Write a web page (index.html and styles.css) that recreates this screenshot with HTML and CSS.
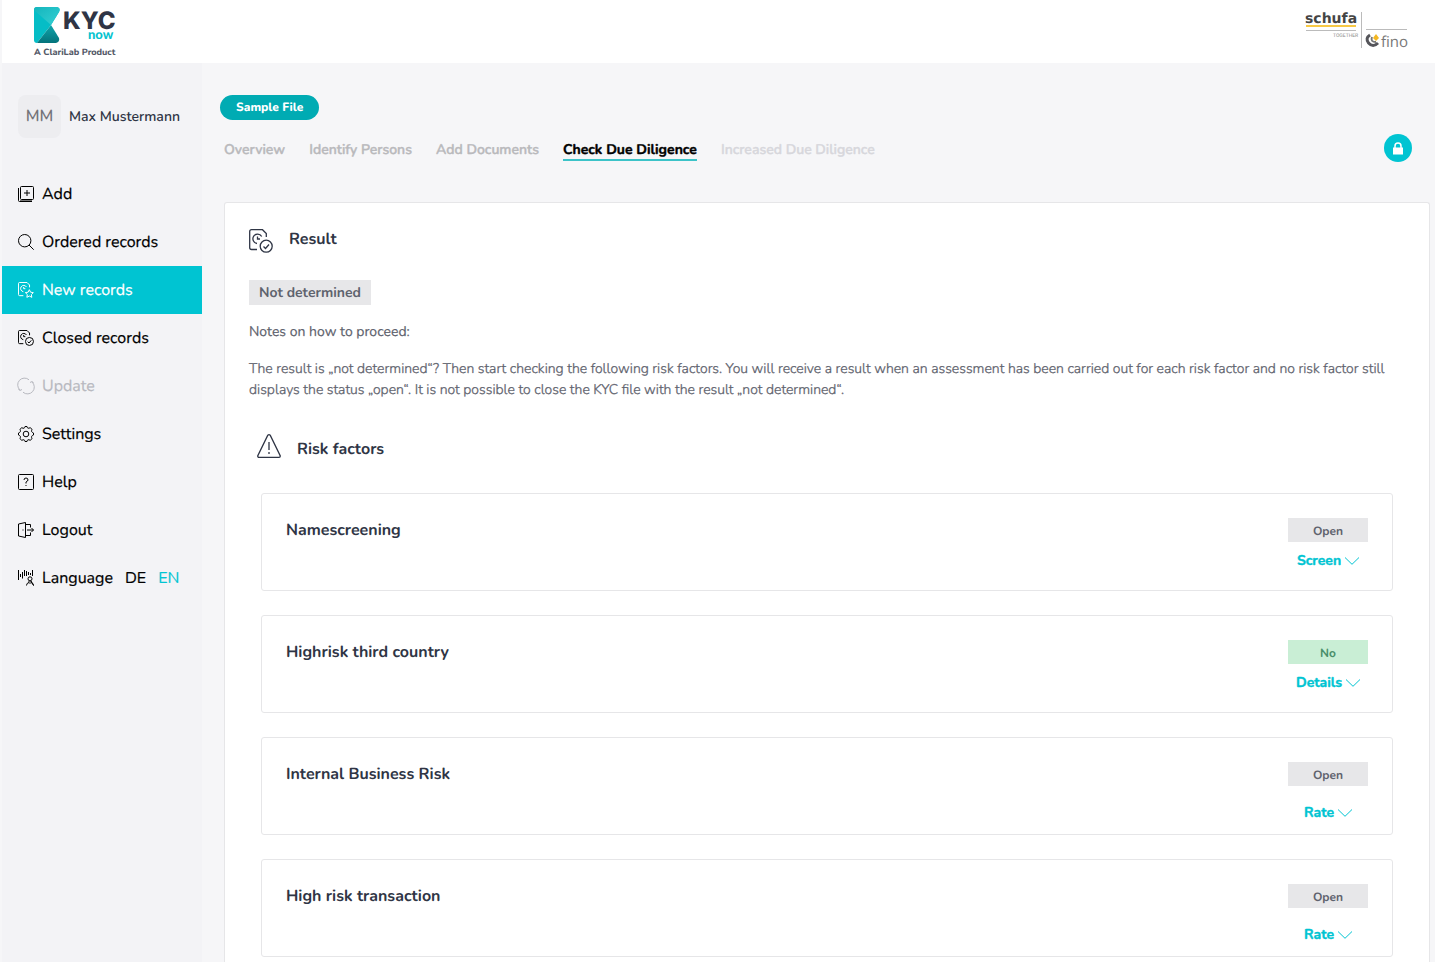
FILE: index.html
```html
<!DOCTYPE html>
<html lang="en">
<head>
<meta charset="utf-8">
<meta name="viewport" content="width=device-width, initial-scale=1">
<title>KYC now – Check Due Diligence</title>
<link rel="stylesheet" href="styles.css">
</head>
<body>
<svg class="sprite" aria-hidden="true">
  <symbol id="record" viewBox="0 0 24 24">
    <path d="M8 20.500H2.500Q.7 20.500.7 18.700V2.500Q.7.700 2.500.700H13.500L17.300 4.500V8M12.700 7.500A4.700 4.700 0 1 0 8 14.500M8.500 7.500V10H11"/>
  </symbol>
  <symbol id="chevron" viewBox="0 0 14 8"><path d="M0 .5 7 7.300 14 .5"/></symbol>
</svg>

<header class="topbar">
  <a class="brand" href="#" aria-label="KYC now">
    <svg width="84" height="50" viewBox="0 0 84 50">
      <defs>
        <linearGradient id="g1" x1="0" y1="0" x2="1" y2="1"><stop offset="0" stop-color="#14b5bd"/><stop offset="1" stop-color="#35d0d3"/></linearGradient>
        <linearGradient id="g2" x1="0" y1="0" x2="0" y2="1"><stop offset="0" stop-color="#10a5ac"/><stop offset="1" stop-color="#04737b"/></linearGradient>
      </defs>
      <path fill="#05bdc6" d="M3 0H23Q27 1 25 5L17 18 3 36Q0 36 0 33V3Q0 0 3 0Z"/>
      <path fill="url(#g1)" d="M3 0H23Q27 1 25 5L17 18 0 3Q0 0 3 0Z"/>
      <path fill="url(#g2)" d="M17 18 25 31Q26 35 22 36H3Z"/>
      <text class="brand-kyc" x="29" y="22">KYC</text>
      <text class="brand-now" x="54" y="32">now</text>
      <text class="brand-sub" x="0" y="48">A ClariLab Product</text>
    </svg>
  </a>
  <svg class="partners" width="103" height="46" viewBox="0 0 103 46" role="img" aria-label="schufa and fino">
    <text class="schufa" x="0" y="16">schufa</text>
    <path stroke="#f8c945" stroke-width="2" d="M1 19H51"/>
    <path stroke="#bbb" d="M1 23.500H51M56.500 5V41M61 22.500H102"/>
    <text class="together" x="28" y="30">TOGETHER</text>
    <path fill="none" stroke="#55555a" stroke-width="3" d="M65 28Q60 31 63.500 36Q68 41 73 36"/>
    <path fill="none" stroke="#777" stroke-width="2" d="M67 30Q65 35 71 35"/>
    <path fill="#f3b722" d="M68 31 71 27 74 31 71 34Z"/>
    <text class="fino" x="76" y="40">fino</text>
  </svg>
</header>

<div class="shell">
  <aside class="sidebar">
    <div class="user"><span class="avatar">MM</span><span class="user-name">Max Mustermann</span></div>
    <nav class="menu">
      <a href="#"><svg class="icon" viewBox="0 0 16 16"><rect x="2.500" y=".5" width="13" height="13" rx="1"/><path d="M9 4V10M6 7H12M.5 2V14.500Q.5 15.500 1.500 15.500H14"/><path class="edge" d="M2 14.500H14"/></svg>Add</a>
      <a href="#"><svg class="icon" viewBox="0 0 16 16"><circle cx="6.700" cy="6.700" r="6.200"/><path d="M11 11 15.700 15.700"/></svg>Ordered records</a>
      <a href="#" class="active" aria-current="page"><svg class="icon record" viewBox="0 0 24 24"><use href="#record" width="24" height="24"/><path d="M17 11.500 18.800 15.300 23 15.900 20 18.800 20.700 23 17 21 13.300 23 14 18.800 11 15.900 15.200 15.300Z"/></svg>New records</a>
      <a href="#"><svg class="icon record" viewBox="0 0 24 24"><use href="#record" width="24" height="24"/><circle cx="17.200" cy="17.200" r="6"/><path d="M14.500 17.500 16.500 19.500 20 15.500"/></svg>Closed records</a>
      <a href="#" class="disabled" aria-disabled="true"><svg class="icon" viewBox="0 0 16 16"><path d="M2 12A6.800 6.800 0 0 1 11 1.800M14 4A6.800 6.800 0 0 1 5 14.200M.3 11.200 2 12.500 4 11.500M12 4.500 14 3.500 15.700 4.800"/></svg>Update</a>
      <a href="#"><svg class="icon" viewBox="0 0 16 16"><circle cx="8" cy="8" r="2.800"/><path d="M6 2.200Q6.800 2 7 .5H9Q9.200 2 10 2.200T12.200 1.700L14.100 3.400Q13.200 4.900 13.700 5.700T15.500 7V9Q14.200 9.300 13.700 10.300T14.100 12.600L12.200 14.300Q10.900 13.500 10 13.800T9 15.500H7Q6.800 14 6 13.800T3.800 14.300L1.900 12.600Q2.800 11.100 2.300 10.300T.5 9V7Q1.800 6.700 2.300 5.700T1.900 3.400L3.800 1.700Q5.100 2.500 6 2.200Z"/></svg>Settings</a>
      <a href="#"><svg class="icon" viewBox="0 0 16 16"><rect x=".5" y=".5" width="15" height="15" rx="1"/><path d="M6 6Q6 4 8 4T10 6Q10 7 8 8V9.500M8 11V12"/></svg>Help</a>
      <a href="#"><svg class="icon" viewBox="0 0 16 16"><path d="M.5 2 7.500.5V15.500L.5 14ZM7.500 2.500H12.500V5.500M7.500 13.500H12.500V10.500M9 8H15.500M13.500 6 15.500 8 13.500 10M5 7.500V8.500"/></svg>Logout</a>
      <div class="language">
        <svg class="icon" viewBox="0 0 16 16"><path d="M.5 0V10M2.500 4V7M4.500 2V8.500M6.500 0V6M8.500 1V6M10.500 2V5M12.500 3V5M14.500 0V6"/><circle cx="12" cy="8.800" r="2"/><path d="M8.500 15.500Q8.500 13 11 12.500V11M13 11V12.500Q15.500 13 15.500 15.500ZM11 12.500 12 13.500 13 12.500"/></svg>
        <span>Language</span><button type="button">DE</button><button type="button" class="current">EN</button>
      </div>
    </nav>
  </aside>

  <main class="content">
    <span class="file-tag">Sample File</span>
    <div class="steps-row">
      <nav class="steps">
        <a href="#">Overview</a>
        <a href="#">Identify Persons</a>
        <a href="#">Add Documents</a>
        <a href="#" class="current" aria-current="step">Check Due Diligence</a>
        <a href="#" class="off" aria-disabled="true">Increased Due Diligence</a>
      </nav>
      <button type="button" class="lock" aria-label="Lock file">
        <svg width="10" height="13" viewBox="0 0 10 13"><rect y="5.500" width="10" height="7" fill="#fff"/><path d="M2 6V4A3 3 0 0 1 8 4V6" fill="none" stroke="#fff" stroke-width="1.500"/></svg>
      </button>
    </div>

    <section class="panel">
      <div class="heading">
        <svg class="heading-icon" viewBox="0 0 24 24"><use href="#record" width="24" height="24"/><circle cx="17.200" cy="17.200" r="6"/><path d="M14.500 17.500 16.500 19.500 20 15.500"/></svg>
        <h2>Result</h2>
      </div>
      <span class="result">Not determined</span>
      <p class="notes">Notes on how to proceed:</p>
      <p class="explain">The result is „not determined“? Then start checking the following risk factors. You will receive a result when an assessment has been carried out for each risk factor and no risk factor still displays the status „open“. It is not possible to close the KYC file with the result „not determined“.</p>

      <div class="risks">
        <div class="heading">
          <svg class="heading-icon" viewBox="0 0 24 24"><path d="M10.800 1.200Q12 0 13.200 1.200L23.300 22Q23.300 23.300 22 23.300H2Q.7 23.300.7 22ZM12 8V16M12 18V20"/></svg>
          <h2>Risk factors</h2>
        </div>
        <div class="cards">
          <article class="card">
            <h3>Namescreening</h3>
            <div class="actions"><span class="status">Open</span><button type="button">Screen<svg class="chevron"><use href="#chevron"/></svg></button></div>
          </article>
          <article class="card">
            <h3>Highrisk third country</h3>
            <div class="actions"><span class="status no">No</span><button type="button">Details<svg class="chevron"><use href="#chevron"/></svg></button></div>
          </article>
          <article class="card">
            <h3>Internal Business Risk</h3>
            <div class="actions rate"><span class="status">Open</span><button type="button">Rate<svg class="chevron"><use href="#chevron"/></svg></button></div>
          </article>
          <article class="card">
            <h3>High risk transaction</h3>
            <div class="actions rate"><span class="status">Open</span><button type="button">Rate<svg class="chevron"><use href="#chevron"/></svg></button></div>
          </article>
        </div>
      </div>
    </section>
  </main>
</div>
</body>
</html>
```
FILE: styles.css
```css
* { box-sizing: border-box; }

body {
  margin: 0;
  padding-left: 2px;
  min-height: 100vh;
  display: flex;
  flex-direction: column;
  background: #f6f6f8;
  color: #2f3545;
  font: 14px/21px Nunito, Lato, "Noto Sans", sans-serif;
  text-rendering: geometricPrecision;
}

a { color: inherit; text-decoration: none; }
button { border: 0; padding: 0; background: none; color: inherit; font: inherit; cursor: pointer; }
h2, h3, p { margin: 0; }
svg { flex: none; }
.sprite { position: absolute; width: 0; height: 0; }

.topbar {
  display: flex;
  justify-content: space-between;
  height: 63px;
  padding: 7px 27px 0 32px;
  background: #fff;
}
.topbar svg { display: block; overflow: visible; }
.brand-kyc { font: 800 24px Inter, sans-serif; fill: #2f3545; }
.brand-now { font: 900 13px Lato, sans-serif; fill: #05c3cf; }
.brand-sub { font: 800 9px Nunito, Lato, sans-serif; fill: #555a68; }
.schufa { font: 700 14px "DejaVu Sans", sans-serif; fill: #444; }
.together { font: 5px Roboto, sans-serif; fill: #888; }
.fino { font: 15px "Open Sans", sans-serif; fill: #777; }

.shell { flex: 1; display: flex; }

.sidebar { flex: none; width: 200px; padding-top: 32px; background: #f3f3f6; }
.user { display: flex; align-items: center; gap: 8px; padding-left: 16px; font-weight: 600; }
.avatar {
  display: grid;
  place-items: center;
  width: 43px;
  height: 43px;
  border-radius: 8px;
  background: #ededf0;
  color: #737378;
  font-size: 16px;
}
.menu { margin-top: 32px; color: #000; font-size: 16px; -webkit-text-stroke: 0.2px; }
.menu > * { display: flex; align-items: center; gap: 8px; height: 48px; padding-left: 16px; }
.menu .active { background: #00c4d2; color: #fff; }
.menu .disabled { color: #b8b9c0; }
.icon { width: 16px; height: 16px; fill: none; stroke: currentColor; overflow: visible; }
.icon.record { stroke-width: 1.5; }
.icon .edge { stroke: #777; }
.language span { margin-right: 4px; }
.language button + button { margin-left: 4px; }
.language .current { color: #00c4d2; }

.content { flex: 1; min-width: 0; display: flex; flex-direction: column; padding: 32px 5px 0 18px; }
.file-tag {
  align-self: flex-start;
  height: 25px;
  padding: 0 16px;
  border-radius: 13px;
  background: #00abb3;
  color: #fff;
  font-size: 12px;
  font-weight: 800;
  line-height: 26px;
}
.steps-row { display: flex; align-items: center; justify-content: space-between; margin-top: 14px; padding: 0 18px 0 4px; }
.steps { display: flex; gap: 24px; margin-top: 4px; color: #b9b9bc; font-weight: 600; line-height: 22px; -webkit-text-stroke: 0.4px; }
.steps a { height: 22px; border-bottom: 2px solid transparent; }
.steps .current { border-color: #3cc3c8; color: #000; font-weight: 700; }
.steps .off { color: #d7d7dc; }
.lock { display: grid; place-items: center; width: 28px; height: 28px; border-radius: 50%; background: #00c4d2; }

.panel {
  flex: 1;
  margin: 40px 0 0 4px;
  padding: 24px 24px 5px;
  border: 1px solid #e6e6e8;
  border-bottom: 0;
  border-radius: 3px 3px 0 0;
  background: #fff;
}
.heading { display: flex; gap: 16px; }
.heading-icon { width: 24px; height: 24px; margin-top: 2px; fill: none; stroke: #2f3545; stroke-width: 1.3; overflow: visible; }
h2, h3 { font-size: 16px; font-weight: 700; line-height: 24px; }
.result {
  display: inline-block;
  margin-top: 27px;
  padding: 0 10px;
  background: #e7e7e9;
  color: #5f636e;
  font-weight: 700;
  line-height: 25px;
}
.notes, .explain { color: #5f636e; -webkit-text-stroke: 0.2px; }
.notes { margin-top: 16px; }
.explain { margin-top: 16px; font-weight: 300; -webkit-text-stroke: 0.3px; }

.risks { margin-top: 34px; padding: 0 12px; }
.risks .heading { margin-left: -4px; }
.risks .heading-icon { margin-top: 0; }
.risks h2 { padding-top: 3px; }
.cards { display: grid; gap: 24px; margin-top: 32px; }
.card { display: flex; justify-content: space-between; min-height: 98px; padding: 24px 24px 0; border: 1px solid #e6e6e8; border-radius: 3px; }
.actions { display: flex; flex-direction: column; align-items: center; gap: 8px; width: 80px; }
.actions.rate { gap: 16px; }
.status { width: 100%; background: #e7e7e9; color: #5f636e; font-size: 12px; font-weight: 700; line-height: 28px; height: 24px; text-align: center; }
.status.no { background: #c9eed5; color: #4a8f6a; }
.actions button { display: flex; align-items: center; gap: 4px; color: #00c4d2; font-weight: 700; -webkit-text-stroke: 0.4px; }
.chevron { width: 14px; height: 8px; fill: none; stroke: currentColor; }
```
